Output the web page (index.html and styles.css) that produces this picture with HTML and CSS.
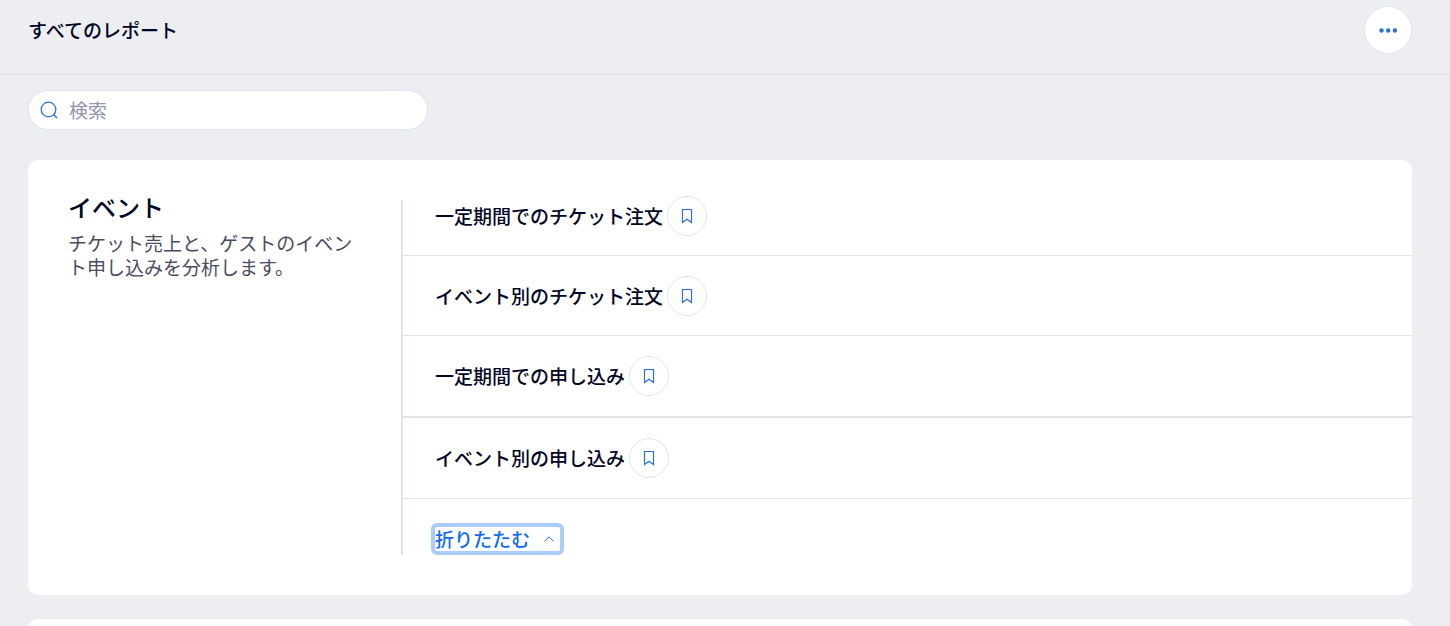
FILE: index.html
```html
<!DOCTYPE html>
<html lang="ja">
<head>
    <meta charset="UTF-8">
    <meta name="viewport" content="width=device-width, initial-scale=1.0">
    <title>すべてのレポート</title>
    <link rel="stylesheet" href="styles.css">
</head>
<body>
    <svg class="sprite" aria-hidden="true">
        <symbol id="bookmark" viewBox="0 0 12 16">
            <path d="M1.5 1.5h9v13L6 11.3l-4.500 3.200z" fill="none" stroke="currentColor" stroke-width="1.200"/>
        </symbol>
    </svg>

    <header class="page-header">
        <h1>すべてのレポート</h1>
        <button type="button" class="more" aria-label="その他">
            <svg width="18" height="6" viewBox="0 0 18 6" fill="currentColor">
                <circle cx="2.500" cy="3.500" r="2.200"/>
                <circle cx="9.200" cy="3.500" r="2.200"/>
                <circle cx="15.900" cy="3.500" r="2.200"/>
            </svg>
        </button>
    </header>

    <main>
        <form class="search">
            <svg width="18" height="18" viewBox="0 0 18 18" fill="none" stroke="currentColor" stroke-width="1.300">
                <circle cx="8.500" cy="8.500" r="7.300"/>
                <path d="M13.700 13.700L17 17"/>
            </svg>
            <input type="search" placeholder="検索" aria-label="検索">
        </form>

        <section class="card">
            <div class="intro">
                <h2>イベント</h2>
                <p>チケット売上と、ゲストのイベント申し込みを分析します。</p>
            </div>
            <div class="reports">
                <ul>
                    <li>
                        <a href="#">一定期間でのチケット注文</a>
                        <button type="button" class="pin" aria-label="ブックマーク"><svg width="12" height="16"><use href="#bookmark"/></svg></button>
                    </li>
                    <li>
                        <a href="#">イベント別のチケット注文</a>
                        <button type="button" class="pin" aria-label="ブックマーク"><svg width="12" height="16"><use href="#bookmark"/></svg></button>
                    </li>
                    <li class="thick">
                        <a href="#">一定期間での申し込み</a>
                        <button type="button" class="pin" aria-label="ブックマーク"><svg width="12" height="16"><use href="#bookmark"/></svg></button>
                    </li>
                    <li>
                        <a href="#">イベント別の申し込み</a>
                        <button type="button" class="pin" aria-label="ブックマーク"><svg width="12" height="16"><use href="#bookmark"/></svg></button>
                    </li>
                    <li class="last">
                        <button type="button" class="collapse">
                            折りたたむ
                            <svg width="10" height="6" viewBox="0 0 10 6" fill="none" stroke="currentColor"><path d="M.5 5.300L5 .8l4.500 4.500"/></svg>
                        </button>
                    </li>
                </ul>
            </div>
        </section>

        <section class="card"></section>
    </main>
</body>
</html>
```
FILE: styles.css
```css
* { box-sizing: border-box; }
body { margin: 0; background: #eceef2; color: #000624; font-family: "Noto Sans CJK JP", sans-serif; font-size: 19px; line-height: 24px; }
h1, h2, p, ul { margin: 0; padding: 0; }
button, input { font: inherit; }
button { padding: 0; cursor: pointer; }
svg { display: block; flex: none; }
.sprite { position: absolute; width: 0; height: 0; }

.page-header { display: flex; align-items: center; justify-content: space-between; padding: 6px 38px 20px 28px; border-bottom: 1px solid #dfe3eb; }
.page-header h1 { font-size: 19px; font-weight: 500; }
.more, .pin { display: flex; align-items: center; justify-content: center; border: 1px solid #dce6f7; border-radius: 50%; background: #fff; color: #2a6fdb; }
.more { width: 48px; height: 48px; }
.pin { width: 40px; height: 40px; }

/* the next card is cut off at the bottom of the window */
main { height: calc(100vh - 75px); overflow: hidden; padding: 15px 38px 0 28px; }
.search { display: flex; align-items: center; gap: 11px; width: 400px; max-width: 100%; height: 40px; margin-bottom: 30px; padding: 0 11px; border: 1px solid #d9e5f7; border-radius: 20px; background: #fff; color: #2a6fdb; }
.search input { flex: 1; min-width: 0; padding: 0; border: 0; outline: 0; background: none; color: #000624; }
.search input::placeholder { color: #9395ae; }

.card { display: flex; min-height: 80px; margin-bottom: 24px; padding: 40px 0 40px 40px; border-radius: 10px; background: #fff; }
.intro { flex: none; width: 333px; padding: 0 40px 0 0; margin-top: -9px; }
.intro h2 { font-size: 24px; font-weight: 500; line-height: 32px; margin-bottom: 8px; }
.intro p { color: #4a4c62; }

/* the rows run past both ends of the vertical rule */
.reports { flex: 1; border-left: 2px solid #dfe3ea; }
.reports ul { margin: -24px 0; list-style: none; }
.reports li { display: flex; align-items: center; gap: 4px; height: 80px; padding-left: 32px; border-bottom: 1px solid #dfe3ea; }
.reports .thick { height: 82px; border-bottom-width: 2px; }
.reports .thick + li { height: 81px; }
.reports .last { padding-left: 28px; border-bottom: 0; }
.reports a { color: inherit; font-weight: 500; text-decoration: none; }
.collapse { display: flex; align-items: center; gap: 14px; height: 32px; padding: 0 6px 0 0; border: 4px solid #a8cdf8; border-radius: 6px; background: #fff; color: #116dee; font-weight: 500; }
```
